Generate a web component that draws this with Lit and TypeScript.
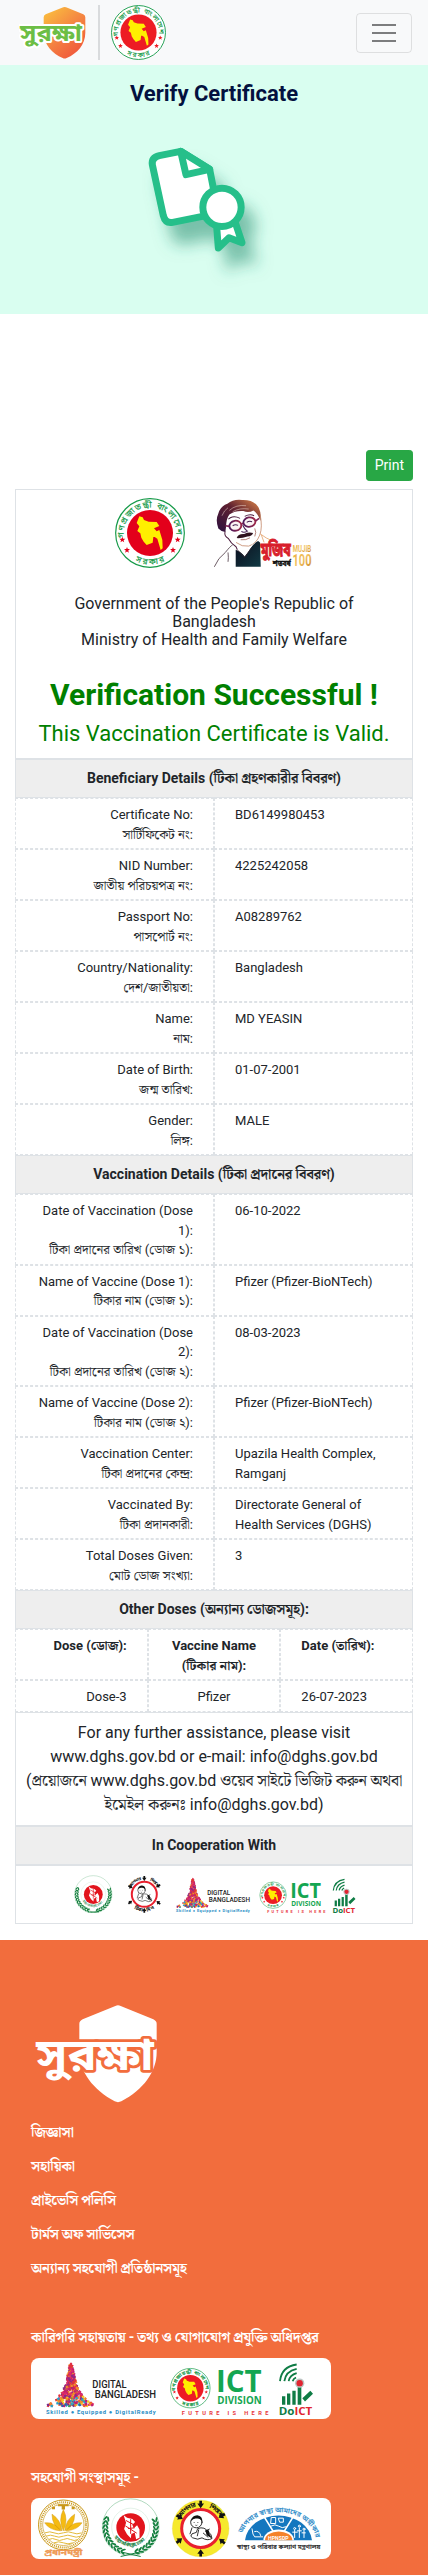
import { LitElement, html, css, svg } from "lit";
import { customElement } from "lit/decorators.js";

const MAP =
  "M-32-50L-22-47-18-39-4-34 20-33 28-21 12-14 20-5 28-9 37 21 38 46 32 51 22 17 14 12 10 12 8 29-10 36-19 26-26 14-29 1-38-6-32-20-40-30Z";

const star = (x: number, y: number, c: string) =>
  svg`<path fill=${c} transform="translate(${x} ${y})" d="M0-9L2.4-3 9-2.8 3.8 1.4 5.6 8 0 4.2-5.6 8-3.8 1.4-9-2.8-2.4-3Z"/>`;

/* Government seal, drawn around 0,0 with an outer radius of 105 */
const seal = (id: string, red: string) => svg`
  <circle r="103" fill="#fff" stroke="#159a48" stroke-width="3.5"/>
  <circle r="69" fill=${red}/>
  <path d=${MAP} fill="#ffef00"/>
  <path id="${id}t" d="M-78 15A79 79 0 1 1 78 15" fill="none"/>
  <path id="${id}b" d="M-68 66A95 95 0 0 0 68 66" fill="none"/>
  <text class="bn" font-size="25" fill="#159a48" stroke="#159a48" stroke-width=".6"><textPath href="#${id}t" textLength="262" startOffset="1">গণপ্রজাতন্ত্রী বাংলাদেশ</textPath></text>
  <text class="bn" font-size="25" fill="#159a48" stroke="#159a48" stroke-width=".6"><textPath href="#${id}b" startOffset="50%" text-anchor="middle" textLength="92">সরকার</textPath></text>
  ${star(-83, 20, red)}${star(-69, 51, red)}${star(69, 51, red)}${star(83, 20, red)}`;

const sealIcon = (id: string, cls: string, red: string) =>
  html`<svg class=${cls} viewBox="-105 -105 210 210">${seal(id, red)}</svg>`;

const navLogo = html`<svg class="nav-logo" viewBox="57 18 201 160">
  <defs><linearGradient id="sh" x1="0" y1="0" x2=".7" y2="1"><stop offset="0" stop-color="#fbc63d"/><stop offset=".5" stop-color="#f58b42"/><stop offset="1" stop-color="#f0583c"/></linearGradient></defs>
  <path fill="url(#sh)" d="M194 21Q190 21 186 23L137 43Q131 46 131 52V98C131 132 158 162 188 174Q194 177 200 174C232 160 256 134 256 98V52Q256 46 250 43L202 23Q198 21 194 21Z"/>
  <text class="bn heavy" x="60" y="122" font-size="72" textLength="186" lengthAdjust="spacingAndGlyphs" fill="#6cbe45" stroke="#fff" stroke-width="12" paint-order="stroke" stroke-linejoin="round">সুরক্ষা</text>
</svg>`;

const footLogo = html`<svg class="foot-logo" viewBox="105 224 366 294">
  <path fill="#fff" d="M354 225Q350 225 346 227L248 267Q238 272 238 280V365C238 425 280 478 344 513Q354 518 364 513C430 478 470 425 470 365V280Q470 272 460 267L362 227Q358 225 354 225Z"/>
  <text class="bn heavy" x="109" y="418" font-size="132" textLength="352" lengthAdjust="spacingAndGlyphs" fill="#fff" stroke="#f26d3d" stroke-width="17" paint-order="stroke" stroke-linejoin="round">সুরক্ষা</text>
</svg>`;

const certificate = html`<svg class="cert" viewBox="400 420 480 450">
  <defs><filter id="ds" x="-30%" y="-30%" width="190%" height="190%"><feDropShadow dx="33" dy="56" stdDeviation="24" flood-color="#2c8f70" flood-opacity=".55"/></filter></defs>
  <g filter="url(#ds)" fill="#fff" stroke="#26bf8a" stroke-width="21" stroke-linejoin="round" stroke-linecap="round">
    <path d="M540 454L476 467Q452 473 455 494L488 647Q494 671 516 667L620 646 645 600 627 508Z"/>
    <path d="M540 454L556 524 627 508Z"/>
    <path d="M648 680L653 744 685 713 724 728 704 668Z"/>
    <circle cx="664" cy="622" r="57.5"/>
  </g>
</svg>`;

const mujib = html`<svg class="mujib" viewBox="0 0 292 205">
  <defs>
    <linearGradient id="hr" x1="0" y1="1" x2="1" y2="0"><stop offset="0" stop-color="#2c1040"/><stop offset=".55" stop-color="#5e2030"/><stop offset="1" stop-color="#e0884a"/></linearGradient>
    <linearGradient id="gl" x1="0" y1="0" x2="1" y2="0"><stop offset="0" stop-color="#4c1a5c"/><stop offset="1" stop-color="#a02848"/></linearGradient>
    <linearGradient id="jk" x1="0" y1="0" x2="1" y2="1"><stop offset="0" stop-color="#0c0c1c"/><stop offset="1" stop-color="#113a44"/></linearGradient>
    <linearGradient id="gd" x1="0" y1="0" x2="1" y2="1"><stop offset="0" stop-color="#e9a93a"/><stop offset=".5" stop-color="#f2c464"/><stop offset="1" stop-color="#c98021"/></linearGradient>
  </defs>
  <path fill="url(#hr)" d="M13 88Q4 62 12 46Q18 22 40 14Q58 0 84 3Q112 2 126 16Q144 34 139 66Q132 44 118 34Q104 42 88 36Q64 34 46 46Q36 60 36 84L34 99Q20 96 13 88Z"/>
  <path fill="none" stroke="#f6e3d6" stroke-width="1.5" d="M46 34Q66 16 96 20M56 38Q76 26 104 30M24 50Q30 34 42 26"/>
  <path fill="none" stroke="#c58a6c" stroke-width="2.5" d="M138 46Q146 84 137 108Q127 134 104 141Q84 144 66 130"/>
  <path fill="none" stroke="#4b1b3c" stroke-width="3" d="M33 97Q30 112 43 118Q50 132 66 143L70 152M43 60L49 56Q62 50 78 58M92 52Q108 44 120 50"/>
  <g fill="#fbf3f4" stroke="url(#gl)" stroke-width="5.5"><ellipse cx="64" cy="80" rx="18" ry="15" transform="rotate(-10 64 80)"/><ellipse cx="106" cy="69" rx="18" ry="14" transform="rotate(-10 106 69)"/></g>
  <path fill="none" stroke="#7c1f50" stroke-width="5" d="M82 75L88 73M46 82L34 80M124 66L135 58"/>
  <path fill="none" stroke="#472052" stroke-width="3" d="M56 80Q64 74 72 79M98 70Q106 64 114 68M86 78Q92 92 100 96Q90 103 82 97"/>
  <path fill="#30131f" d="M68 117Q72 104 90 105Q104 98 117 102Q114 112 100 112Q84 118 68 117Z"/>
  <path fill="none" stroke="#8f4a3c" stroke-width="2" d="M80 122Q96 124 108 116M122 88Q128 100 122 112"/>
  <path fill="url(#jk)" d="M65 152Q82 158 92 172Q108 140 132 126L138 130 140 203H65Z"/>
  <path fill="#fff" d="M70 150Q90 148 108 144L120 132 100 162 92 170Z"/>
  <path fill="none" stroke="#38222e" stroke-width="2.2" d="M1 203Q12 176 34 160Q48 142 56 137M42 160Q44 176 42 188M70 152L92 175 112 146"/>
  <path fill="none" stroke="#e3a066" stroke-width="2.4" d="M138 104Q156 118 176 126M142 108L150 130"/>
  <text class="bn heavy" x="140" y="171" font-size="54" textLength="90" lengthAdjust="spacingAndGlyphs" fill="#d81e2c" stroke="#d81e2c" stroke-width="3">মুজিব</text>
  <text class="bn heavy" x="176" y="200" font-size="22" textLength="54" lengthAdjust="spacingAndGlyphs" fill="#111" stroke="#111">শতবর্ষ</text>
  <text class="lt" x="236" y="158" font-size="25" textLength="55" lengthAdjust="spacingAndGlyphs" fill="url(#gd)">MUJIB</text>
  <text class="lt" x="235" y="201" font-size="51" textLength="57" lengthAdjust="spacingAndGlyphs" fill="url(#gd)">100</text>
</svg>`;

const leaves = [-1, 1].flatMap((s) =>
  Array.from({ length: 11 }, (_, i) => {
    const a = ((-18 + i * 9.2) * Math.PI) / 180;
    const x = s * Math.cos(a) * 76;
    const y = Math.sin(a) * 76;
    const r = (Math.atan2(y, x) * 180) / Math.PI;
    return svg`<g transform="translate(${x} ${y}) rotate(${r + 90})" fill="#15803f"><ellipse rx="8" ry="3" cy="-5" transform="rotate(28)"/><ellipse rx="8" ry="3" cy="5" transform="rotate(-28)"/></g>`;
  })
);

/* Directorate of Health emblem, radius 87 around 0,0 */
const dghs = (id: string) => svg`
  <circle r="85" fill="#fff" stroke="#8cc7a0" stroke-width="2"/>
  <circle r="57" fill="none" stroke="#c9e4d2" stroke-width="1.5"/>
  ${leaves}
  <path d="M-30 74L30 88M30 74L-30 88" stroke="#15803f" stroke-width="3"/>
  <circle r="43" cy="1" fill="#e2141c"/>
  <path transform="translate(2 0) scale(.72)" d="M-32-50L-18-39 4-34 16-22 4-10 10 4 24-8 34 10 34 44 20 50 14 22 0 28-2 46-18 30-30 8-22-18Z" fill="#fff"/>
  <path d="M-14-20L8-8M-8 4L12 2M0-24V20M-16-4L18 18" stroke="#e2141c" stroke-width="3"/>
  <path id="${id}w" d="M-50 28A57 57 0 0 0 50 28" fill="none"/>
  <text class="bn" font-size="15" fill="#15803f"><textPath href="#${id}w" textLength="108">স্বাস্থ্য অধিদপ্তর, ঢাকা</textPath></text>`;

const cross = (x: number, y: number, r: number) =>
  svg`<path transform="translate(${x} ${y}) rotate(${r})" d="M-4-11H4V-3H10L0 11-10-3H-4Z" fill="#111"/>`;

/* Immunisation programme emblem, radius 86 around 0,0 */
const epi = (id: string, bg: string) => svg`
  <circle r="85" fill=${bg} stroke=${bg === "#fff" ? "none" : "#e8d93a"} stroke-width="1"/>
  <circle r="57" fill="#fff" stroke="#e8202e" stroke-width="9"/>
  <path id="${id}u" d="M-66-12A67 67 0 0 1 66-12" fill="none"/>
  <path id="${id}d" d="M-60 52A79 79 0 0 0 60 52" fill="none"/>
  <text class="bn heavy" font-size="19" fill="#111"><textPath href="#${id}u" startOffset="22" textLength="58">আপনার</textPath></text>
  <text class="bn heavy" font-size="19" fill="#111"><textPath href="#${id}u" startOffset="114" textLength="48">শিশুকে</textPath></text>
  <text class="bn heavy" font-size="22" fill="#111"><textPath href="#${id}d" startOffset="18" textLength="42">টিকা</textPath></text>
  <text class="bn heavy" font-size="22" fill="#111"><textPath href="#${id}d" startOffset="80" textLength="38">দিন</textPath></text>
  ${cross(0, -72, 0)}${cross(0, 73, 180)}${cross(-63, -34, -60)}${cross(63, -38, 60)}${cross(-64, 36, 230)}${cross(64, 38, 130)}
  <g fill="#fff" stroke="#111" stroke-width="2.6" stroke-linecap="round">
    <path d="M-8 0Q12-8 24 12Q32 14 34 30Q20 38 4 28Q-8 36-24 28Q-34 24-26 16L-14 12Z"/>
    <circle cx="-13" cy="-19" r="17"/>
    <path d="M-26-2L-32 16M-6 4L-10 22M8 14L22 26M14 8L26 2" fill="none"/>
  </g>
  <path d="M-29-22Q-26-40-10-40Q6-38 5-20Q-2-32-12-30Q-22-32-29-22Z" fill="#111"/>
  <path d="M14 6Q26-2 26 16L34 30 18 20Z" fill="#111"/>
  <path d="M-21-18H-18M-10-18H-7M-16-10Q-13-8-10-10" stroke="#111" stroke-width="2" fill="none"/>`;

const TREE_COLORS = ["#e02a6b", "#7a2b8c", "#f28c28", "#2b62b0", "#e2323a", "#f5c61f", "#c01f72", "#39a857", "#f0632c", "#2aa3c9"];
const treeDots = Array.from({ length: 380 }, (_, i) => {
  const t = Math.pow(((i * 37) % 380) / 380, 0.62);
  const h = (Math.sin(i * 12.9898) * 43758.5453) % 1;
  const half = 3 + t * 27 + Math.pow(t, 5) * 48;
  const x = 213 + h * half;
  const y = 282 + t * 126;
  const c = t > 0.78 ? TREE_COLORS[(i * 7) % 10] : ["#e02a6b", "#8a2b86", "#e2323a", "#f28c28", "#c01f72"][i % 5];
  return svg`<rect x=${x - 3.5} y=${y - 3.5} width="7" height="7" fill=${c} transform="rotate(${(i * 31) % 90} ${x} ${y})"/>`;
});

const techLogos = (id: string, cls: string) => html`<svg class=${cls} viewBox="93 264 900 182">
  ${treeDots}
  <path d="M213 275L216 284 222 285 217 289 219 296 213 292 207 296 209 289 204 285 210 284Z" fill="#e2323a"/>
  <g class="lt">
    <text class="din" x="277" y="354" font-size="30" textLength="103" lengthAdjust="spacingAndGlyphs" fill="#222">DIGITAL</text>
    <text class="din" x="284" y="383" font-size="30" textLength="184" lengthAdjust="spacingAndGlyphs" fill="#222">BANGLADESH</text>
    <text x="138" y="431" font-size="17.5" textLength="329" fill="#2b8fc6">Skilled ● Equipped ● DigitalReady</text>
    <text class="open" x="648" y="367" font-size="93" textLength="137" lengthAdjust="spacingAndGlyphs" fill="#14a651">ICT</text>
    <text class="open" x="652" y="401" font-size="34" textLength="133" lengthAdjust="spacingAndGlyphs" fill="#14a651">DIVISION</text>
    <text x="545" y="435" font-size="17" textLength="260" fill="#e8353c">FUTURE IS HERE</text>
    <text class="open" x="836" y="435" font-size="33" textLength="101" lengthAdjust="spacingAndGlyphs" fill="#0f7c45">Do<tspan fill="#e02430">ICT</tspan></text>
  </g>
  <g transform="translate(571 354) scale(.575)">${seal(id, "#ed1c24")}</g>
  <g fill="none" stroke="#0f7c45" stroke-width="5.5">
    <path d="M840 333Q844 290 890 283"/><path d="M853 333Q857 303 890 296"/><path d="M866 333Q869 315 890 309"/><path d="M878 333Q880 326 888 322"/>
  </g>
  <path fill="#0f7c45" d="M846 378H856V404H846ZM861 370H871V404H861ZM877 362H887V404H877ZM893 345H904V404H893ZM907 384L931 362 939 371 915 394Z"/>
  <circle cx="899" cy="339" r="14" fill="#bfc4c2"/><circle cx="899" cy="339" r="9.5" fill="#e02430"/>
</svg>`;

const agencyLogos = html`<svg class="card-art" viewBox="93 684 900 182">
  <g transform="translate(190 764)" fill="none" stroke="#c9981a">
    <circle r="74.5" stroke-width="3"/><circle r="68" stroke-width="6" stroke-dasharray="3 3"/><circle r="62" stroke-width="2"/>
    <path stroke="#e3bb3c" stroke-width="3" d="M-55 24Q-40 18-28 24T0 24 28 24 55 24M-52 34Q-38 28-26 34T0 34 26 34 52 34M-44 44Q-32 38-22 44T0 44 22 44 44 44M-28 54Q-14 48 0 54T28 54"/>
    <path fill="#f5bb12" stroke="#d29a10" stroke-width="1.5" d="M0 18Q-16-14 0-46Q16-14 0 18ZM-4 18Q-34 4-34-32Q-8-16-4 18ZM4 18Q34 4 34-32Q8-16 4 18ZM-8 18Q-42 16-56-6Q-26-10-8 18ZM8 18Q42 16 56-6Q26-10 8 18Z"/>
    <path fill="#c9981a" stroke="none" d="M-16-62H16V-56H5V-46H-5V-56H-16ZM-34-54h9v7h-9ZM25-54h9v7h-9Z"/>
  </g>
  <text class="bn" x="133" y="856" font-size="25" textLength="114" lengthAdjust="spacingAndGlyphs" fill="#ef9a55" stroke="#ef9a55">প্রধানমন্ত্রী</text>
  <g transform="translate(392 771)">${dghs("f")}</g>
  <g transform="translate(602 775)">${epi("g", "#f6e92d")}</g>
  <path d="M735 810A101 82 0 0 1 936 810Z" fill="#1477bf"/>
  <path d="M836 810L780 720M836 810L892 720" stroke="#fff" stroke-width="5"/>
  <path d="M790 810A46 32 0 0 1 882 810Z" fill="#fff"/><path d="M795 810A41 26 0 0 1 877 810Z" fill="#f5822a"/>
  <text class="lt" x="804" y="809" font-size="15" textLength="62" lengthAdjust="spacingAndGlyphs" fill="#fff">HPNSDP</text>
  <g fill="none" stroke="#fff" stroke-width="3" stroke-linecap="round"><path d="M815 742h12v18h-14ZM836 744h14v12h-10ZM812 768q14-8 24 0t22 2M756 776q2 20 8 24h24M764 784q14-4 18 12M884 780v22M898 774v28M912 782v20M878 786h14M892 782h12M906 788h10"/><circle cx="884" cy="775" r="3"/><circle cx="898" cy="768" r="3"/><circle cx="912" cy="777" r="3"/></g>
  <path id="hp" d="M727 790A112 86 0 0 1 946 800" fill="none"/>
  <text class="bn" font-size="21" fill="#3d93cc"><textPath href="#hp" textLength="280">আপনার স্বাস্থ্য আমাদের অঙ্গীকার</textPath></text>
  <text class="bn" x="711" y="837" font-size="17" textLength="250" lengthAdjust="spacingAndGlyphs" fill="#333">স্বাস্থ্য ও পরিবার কল্যাণ মন্ত্রণালয়</text>
</svg>`;

type Row = [string, string, string];

const beneficiary: Row[] = [
  ["Certificate No:", "সার্টিফিকেট নং:", "BD6149980453"],
  ["NID Number:", "জাতীয় পরিচয়পত্র নং:", "4225242058"],
  ["Passport No:", "পাসপোর্ট নং:", "A08289762"],
  ["Country/Nationality:", "দেশ/জাতীয়তা:", "Bangladesh"],
  ["Name:", "নাম:", "MD YEASIN"],
  ["Date of Birth:", "জন্ম তারিখ:", "01-07-2001"],
  ["Gender:", "লিঙ্গ:", "MALE"],
];

const vaccination: Row[] = [
  ["Date of Vaccination (Dose 1):", "টিকা প্রদানের তারিখ (ডোজ ১):", "06-10-2022"],
  ["Name of Vaccine (Dose 1):", "টিকার নাম (ডোজ ১):", "Pfizer (Pfizer-BioNTech)"],
  ["Date of Vaccination (Dose 2):", "টিকা প্রদানের তারিখ (ডোজ ২):", "08-03-2023"],
  ["Name of Vaccine (Dose 2):", "টিকার নাম (ডোজ ২):", "Pfizer (Pfizer-BioNTech)"],
  ["Vaccination Center:", "টিকা প্রদানের কেন্দ্র:", "Upazila Health Complex, Ramganj"],
  ["Vaccinated By:", "টিকা প্রদানকারী:", "Directorate General of Health Services (DGHS)"],
  ["Total Doses Given:", "মোট ডোজ সংখ্যা:", "3"],
];

const links = ["জিজ্ঞাসা", "সহায়িকা", "প্রাইভেসি পলিসি", "টার্মস অফ সার্ভিসেস", "অন্যান্য সহযোগী প্রতিষ্ঠানসমূহ"];

@customElement("app-root")
export class AppRoot extends LitElement {
  static styles = css`
    :host { display: block; font-family: Roboto, "Noto Serif Bengali", sans-serif; font-size: 16px; line-height: 1.5; color: #212529; background: #fff; }
    * { box-sizing: border-box; }
    svg { display: block; flex: none; }
    .bn { font-family: "Noto Sans Bengali", sans-serif; }
    .heavy { font-weight: 700; }
    .lt { font-family: Roboto, sans-serif; font-weight: 700; }
    .din { font-weight: 500; }
    .open { font-family: "Open Sans", sans-serif; font-weight: 700; }
    .nav { height: 65px; background: #f8f9fa; display: flex; align-items: center; padding: 0 16px 0 19px; }
    .nav-logo { width: 67px; height: 53.3px; }
    .rule { width: 1.5px; height: 55px; background: #d9dbdd; margin: 0 11px 0 12px; }
    .nav-seal { width: 55px; height: 55px; }
    .toggler { margin-left: auto; width: 56px; height: 40px; border: 1px solid rgba(0, 0, 0, .1); border-radius: 4px; background: none; padding: 0; display: flex; flex-direction: column; align-items: center; justify-content: center; gap: 6px; }
    .bar { width: 24px; height: 2px; background: #7c7d7e; }
    .hero { height: 249px; background: #d9fef0; display: flex; flex-direction: column; align-items: center; padding-top: 12px; }
    .hero-title { margin: 0; font-size: 22px; font-weight: 700; line-height: 33px; color: #03113f; }
    .cert { width: 160px; height: 150px; margin: 30px 0 0; }
    .main { padding: 136px 15px 16.5px; }
    .actions { display: flex; justify-content: flex-end; }
    .print { font: inherit; font-size: 14px; line-height: 21px; padding: 4px 8px; border: 1px solid #28a745; border-radius: 3.2px; background: #28a745; color: #fff; }
    .sheet { margin-top: 8px; }
    .solid { border: 1px solid #dee2e6; text-align: center; }
    .intro { height: 270px; padding-top: 8px; }
    .emblems { display: flex; align-items: flex-start; justify-content: center; gap: 29px; padding-right: 2px; }
    .seal { width: 70px; height: 70px; }
    .mujib { width: 97.5px; height: 68.5px; margin-top: 1px; overflow: visible; }
    .gov { margin: 27px 50px 0; font-size: 16px; line-height: 18px; }
    .ok { margin: 27.5px 0 0; font-size: 30px; font-weight: 700; line-height: 36px; color: green; }
    .valid { margin: 4px 0 0; font-size: 22px; line-height: 33px; color: green; }
    .band { font-size: 14px; font-weight: 700; line-height: 21px; padding: 8px; background: #eee; }
    .tight { letter-spacing: -.22px; }
    .row { display: grid; grid-template-columns: 1fr 1fr; }
    .row.three { grid-template-columns: 1fr 1fr 1fr; }
    .cell { border: 1px dashed #dee2e6; padding: 6px 20px 4px; font-size: 13px; line-height: 19.5px; }
    .r { text-align: right; }
    .c { text-align: center; }
    .b { font-weight: 700; }
    .help { padding: 8px 0; line-height: 24px; white-space: nowrap; }
    .coop { height: 59px; display: flex; align-items: flex-start; padding: 9px 0 0 58px; }
    .coop-dghs { width: 38.6px; height: 38.6px; }
    .coop-epi { width: 38.6px; height: 38.6px; margin: 0 3px 0 12px; }
    .coop-tech { width: 201.6px; height: 40.8px; }
    .footer { background: #f26d3d; height: 635px; padding: 64.5px 31px 0; color: #fff; font-size: 14px; font-weight: 700; display: flex; flex-direction: column; align-items: flex-start; }
    .foot-logo { width: 122px; height: 98px; margin-left: 4px; overflow: visible; }
    .links { margin-top: 19px; display: flex; flex-direction: column; gap: 13px; line-height: 21px; letter-spacing: -.3px; }
    .group { line-height: 21px; letter-spacing: -.25px; }
    .g1 { margin-top: 48px; }
    .g2 { margin-top: 48px; }
    .card { margin-top: 10px; width: 300px; height: 61px; border-radius: 8px; background: #fff; overflow: hidden; }
    .card-art { width: 300px; height: 61px; }
  `;

  private rows(list: Row[]) {
    return list.map(
      ([en, bn, value]) => html`<div class="row"><div class="cell r">${en}<br />${bn}</div><div class="cell">${value}</div></div>`
    );
  }

  render() {
    return html`
      <nav class="nav">
        ${navLogo}<span class="rule"></span>${sealIcon("n", "nav-seal", "#ed1c24")}
        <button class="toggler" aria-label="Menu"><span class="bar"></span><span class="bar"></span><span class="bar"></span></button>
      </nav>
      <header class="hero"><h1 class="hero-title">Verify Certificate</h1>${certificate}</header>
      <main class="main">
        <div class="actions"><button class="print">Print</button></div>
        <section class="sheet">
          <div class="solid intro">
            <div class="emblems">${sealIcon("s", "seal", "#e3001b")}${mujib}</div>
            <div class="gov">Government of the People's Republic of Bangladesh<br />Ministry of Health and Family Welfare</div>
            <h2 class="ok">Verification Successful !</h2>
            <div class="valid">This Vaccination Certificate is Valid.</div>
          </div>
          <div class="solid band">Beneficiary Details (<span class="tight">টিকা গ্রহণকারীর বিবরণ</span>)</div>
          ${this.rows(beneficiary)}
          <div class="solid band">Vaccination Details (<span class="tight">টিকা প্রদানের বিবরণ</span>)</div>
          ${this.rows(vaccination)}
          <div class="solid band">Other Doses (<span class="tight">অন্যান্য ডোজসমূহ</span>):</div>
          <div class="row three">
            <div class="cell r b">Dose (ডোজ):</div>
            <div class="cell c b">Vaccine Name (টিকার নাম):</div>
            <div class="cell b">Date (তারিখ):</div>
          </div>
          <div class="row three">
            <div class="cell r">Dose-3</div>
            <div class="cell c">Pfizer</div>
            <div class="cell">26-07-2023</div>
          </div>
          <div class="solid help">For any further assistance, please visit<br />www.dghs.gov.bd or e-mail: info@dghs.gov.bd<br />(<span class="tight">প্রয়োজনে</span> www.dghs.gov.bd <span class="tight">ওয়েব সাইটে ভিজিট করুন অথবা</span><br />ইমেইল করুনঃ info@dghs.gov.bd)</div>
          <div class="solid band">In Cooperation With</div>
          <div class="solid coop">
            <svg class="coop-dghs" viewBox="-88 -88 176 176">${dghs("c")}</svg>
            <svg class="coop-epi" viewBox="-88 -88 176 176">${epi("e", "#fff")}</svg>
            ${techLogos("k", "coop-tech")}
          </div>
        </section>
      </main>
      <footer class="footer">
        ${footLogo}
        <div class="links">${links.map((l) => html`<span>${l}</span>`)}</div>
        <div class="group g1">কারিগরি সহায়তায় - তথ্য ও যোগাযোগ প্রযুক্তি অধিদপ্তর</div>
        <div class="card">${techLogos("m", "card-art")}</div>
        <div class="group g2">সহযোগী সংস্থাসমূহ -</div>
        <div class="card">${agencyLogos}</div>
      </footer>
    `;
  }
}
